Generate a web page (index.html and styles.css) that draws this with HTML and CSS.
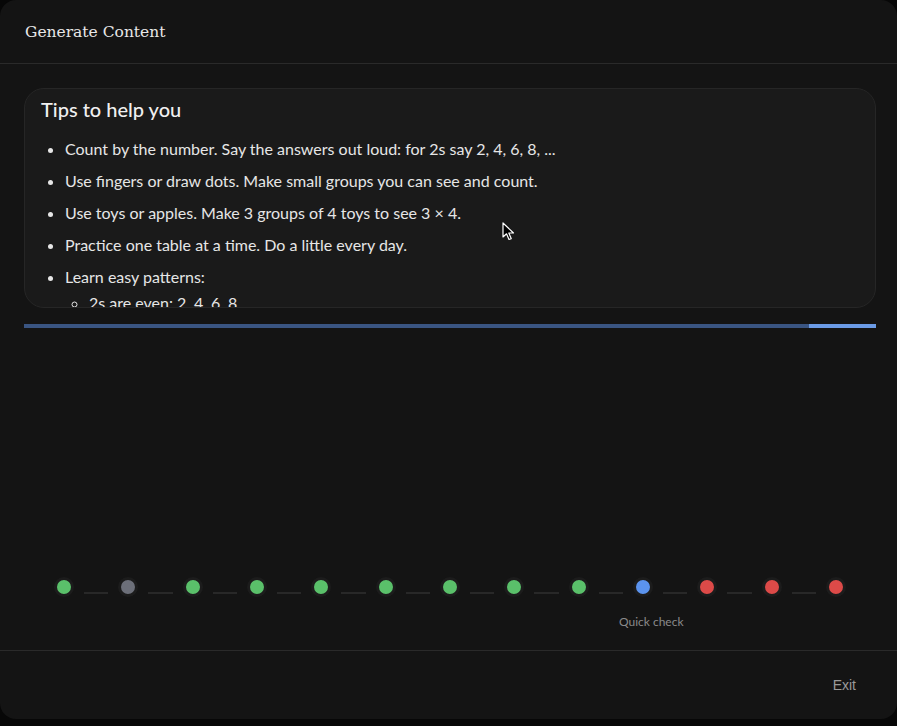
FILE: index.html
```html
<!DOCTYPE html>
<html lang="en">
<head>
<meta charset="utf-8">
<title>Generate Content</title>
<link rel="stylesheet" href="styles.css">
</head>
<body>
<div class="modal">
  <header class="modal-header">
    <h1 class="modal-title">Generate Content</h1>
  </header>
  <main class="modal-body">
    <section class="tips-card">
      <h2 class="tips-title">Tips to help you</h2>
      <ul class="tips-list">
        <li>Count by the number. Say the answers out loud: for 2s say 2, 4, 6, 8, ...</li>
        <li>Use fingers or draw dots. Make small groups you can see and count.</li>
        <li>Use toys or apples. Make 3 groups of 4 toys to see 3 × 4.</li>
        <li>Practice one table at a time. Do a little every day.</li>
        <li>Learn easy patterns:
          <ul class="sub-list">
            <li>2s are even: 2, 4, 6, 8</li>
            <li>5s end in 0 or 5</li>
          </ul>
        </li>
      </ul>
    </section>
    <div class="progress">
      <div class="progress-fill"></div>
    </div>
    <div class="stepper">
      <span class="dot green"></span><span class="line"></span>
      <span class="dot gray"></span><span class="line"></span>
      <span class="dot green"></span><span class="line"></span>
      <span class="dot green"></span><span class="line"></span>
      <span class="dot green"></span><span class="line"></span>
      <span class="dot green"></span><span class="line"></span>
      <span class="dot green"></span><span class="line"></span>
      <span class="dot green"></span><span class="line"></span>
      <span class="dot green"></span><span class="line"></span>
      <span class="dot blue"><span class="dot-label">Quick check</span></span><span class="line"></span>
      <span class="dot red"></span><span class="line"></span>
      <span class="dot red"></span><span class="line"></span>
      <span class="dot red"></span>
    </div>
  </main>
  <footer class="modal-footer">
    <button class="exit-btn" type="button">Exit</button>
  </footer>
  <svg class="cursor" width="14" height="20" viewBox="0 0 14 20">
    <path d="M1 1 L1 15 L4.5 11.8 L7 17.5 L9.2 16.6 L6.8 11 L11.5 11 Z" fill="#000" stroke="#fff" stroke-width="1.2" stroke-linejoin="round"/>
  </svg>
</div>
</body>
</html>
```

FILE: styles.css
```css
* { box-sizing: border-box; }
html, body { margin: 0; padding: 0; }
body {
  background: #070707;
  width: 897px;
  height: 726px;
  overflow: hidden;
  font-family: "Lato", "Noto Sans", sans-serif;
  color: #e6e6e6;
}
.modal {
  position: relative;
  width: 897px;
  height: 719px;
  background: #141414;
  border-radius: 16px;
  display: flex;
  flex-direction: column;
  overflow: hidden;
}
.modal-header {
  height: 64px;
  border-bottom: 1px solid #2a2a2a;
  display: flex;
  align-items: center;
  padding: 0 24px 0 25px;
}
.modal-title {
  margin: 0;
  font-family: "DejaVu Serif", "Liberation Serif", serif;
  font-weight: 400;
  font-size: 15.5px;
  color: #e8e8e8;
}
.modal-body {
  flex: 1;
  display: flex;
  flex-direction: column;
  padding: 24px 21px 0 24px;
}
.tips-card {
  height: 220px;
  background: #1a1a1a;
  border: 1px solid #262626;
  border-radius: 20px;
  padding: 8px 16px 0;
  overflow: hidden;
}
.tips-title {
  margin: 0 0 17px;
  font-size: 20px;
  font-weight: 500;
  color: #f0f0f0;
  line-height: 24px;
}
.tips-list {
  margin: 0;
  padding-left: 24px;
  font-size: 16px;
  line-height: 22px;
}
.tips-list > li { margin-bottom: 10px; }
.sub-list {
  list-style: circle;
  margin: 4px 0 0;
  padding-left: 24px;
}
.sub-list li { margin-bottom: 10px; }
.progress {
  margin-top: 16px;
  height: 4px;
  background: #3a5582;
  display: flex;
  justify-content: flex-end;
}
.progress-fill {
  width: 67px;
  background: #6b9be6;
}
.stepper {
  margin-top: auto;
  margin-bottom: 53px;
  padding: 0 30px;
  display: flex;
  align-items: flex-start;
}
.dot {
  position: relative;
  flex: none;
  width: 20px;
  height: 20px;
  border-radius: 50%;
  border: 3px solid #1c1c1c;
}
.green { background: #5ac06a; }
.gray { background: #6c6f79; }
.blue { background: #5b93ee; }
.red { background: #dc4a48; }
.line {
  flex: 1;
  height: 2px;
  margin: 15px 10px 0;
  background: #282828;
}
.dot-label {
  position: absolute;
  top: 34px;
  left: -17px;
  white-space: nowrap;
  font-size: 12px;
  color: #8a8a8a;
}
.modal-footer {
  height: 69px;
  border-top: 1px solid #2a2a2a;
  display: flex;
  align-items: center;
  justify-content: flex-end;
  padding: 0 25px;
}
.exit-btn {
  background: none;
  border: none;
  font-family: "Liberation Sans", Arial, sans-serif;
  font-size: 14px;
  color: #9a9a9a;
  padding: 8px 16px;
}
.cursor {
  position: absolute;
  left: 502px;
  top: 222px;
}
```
